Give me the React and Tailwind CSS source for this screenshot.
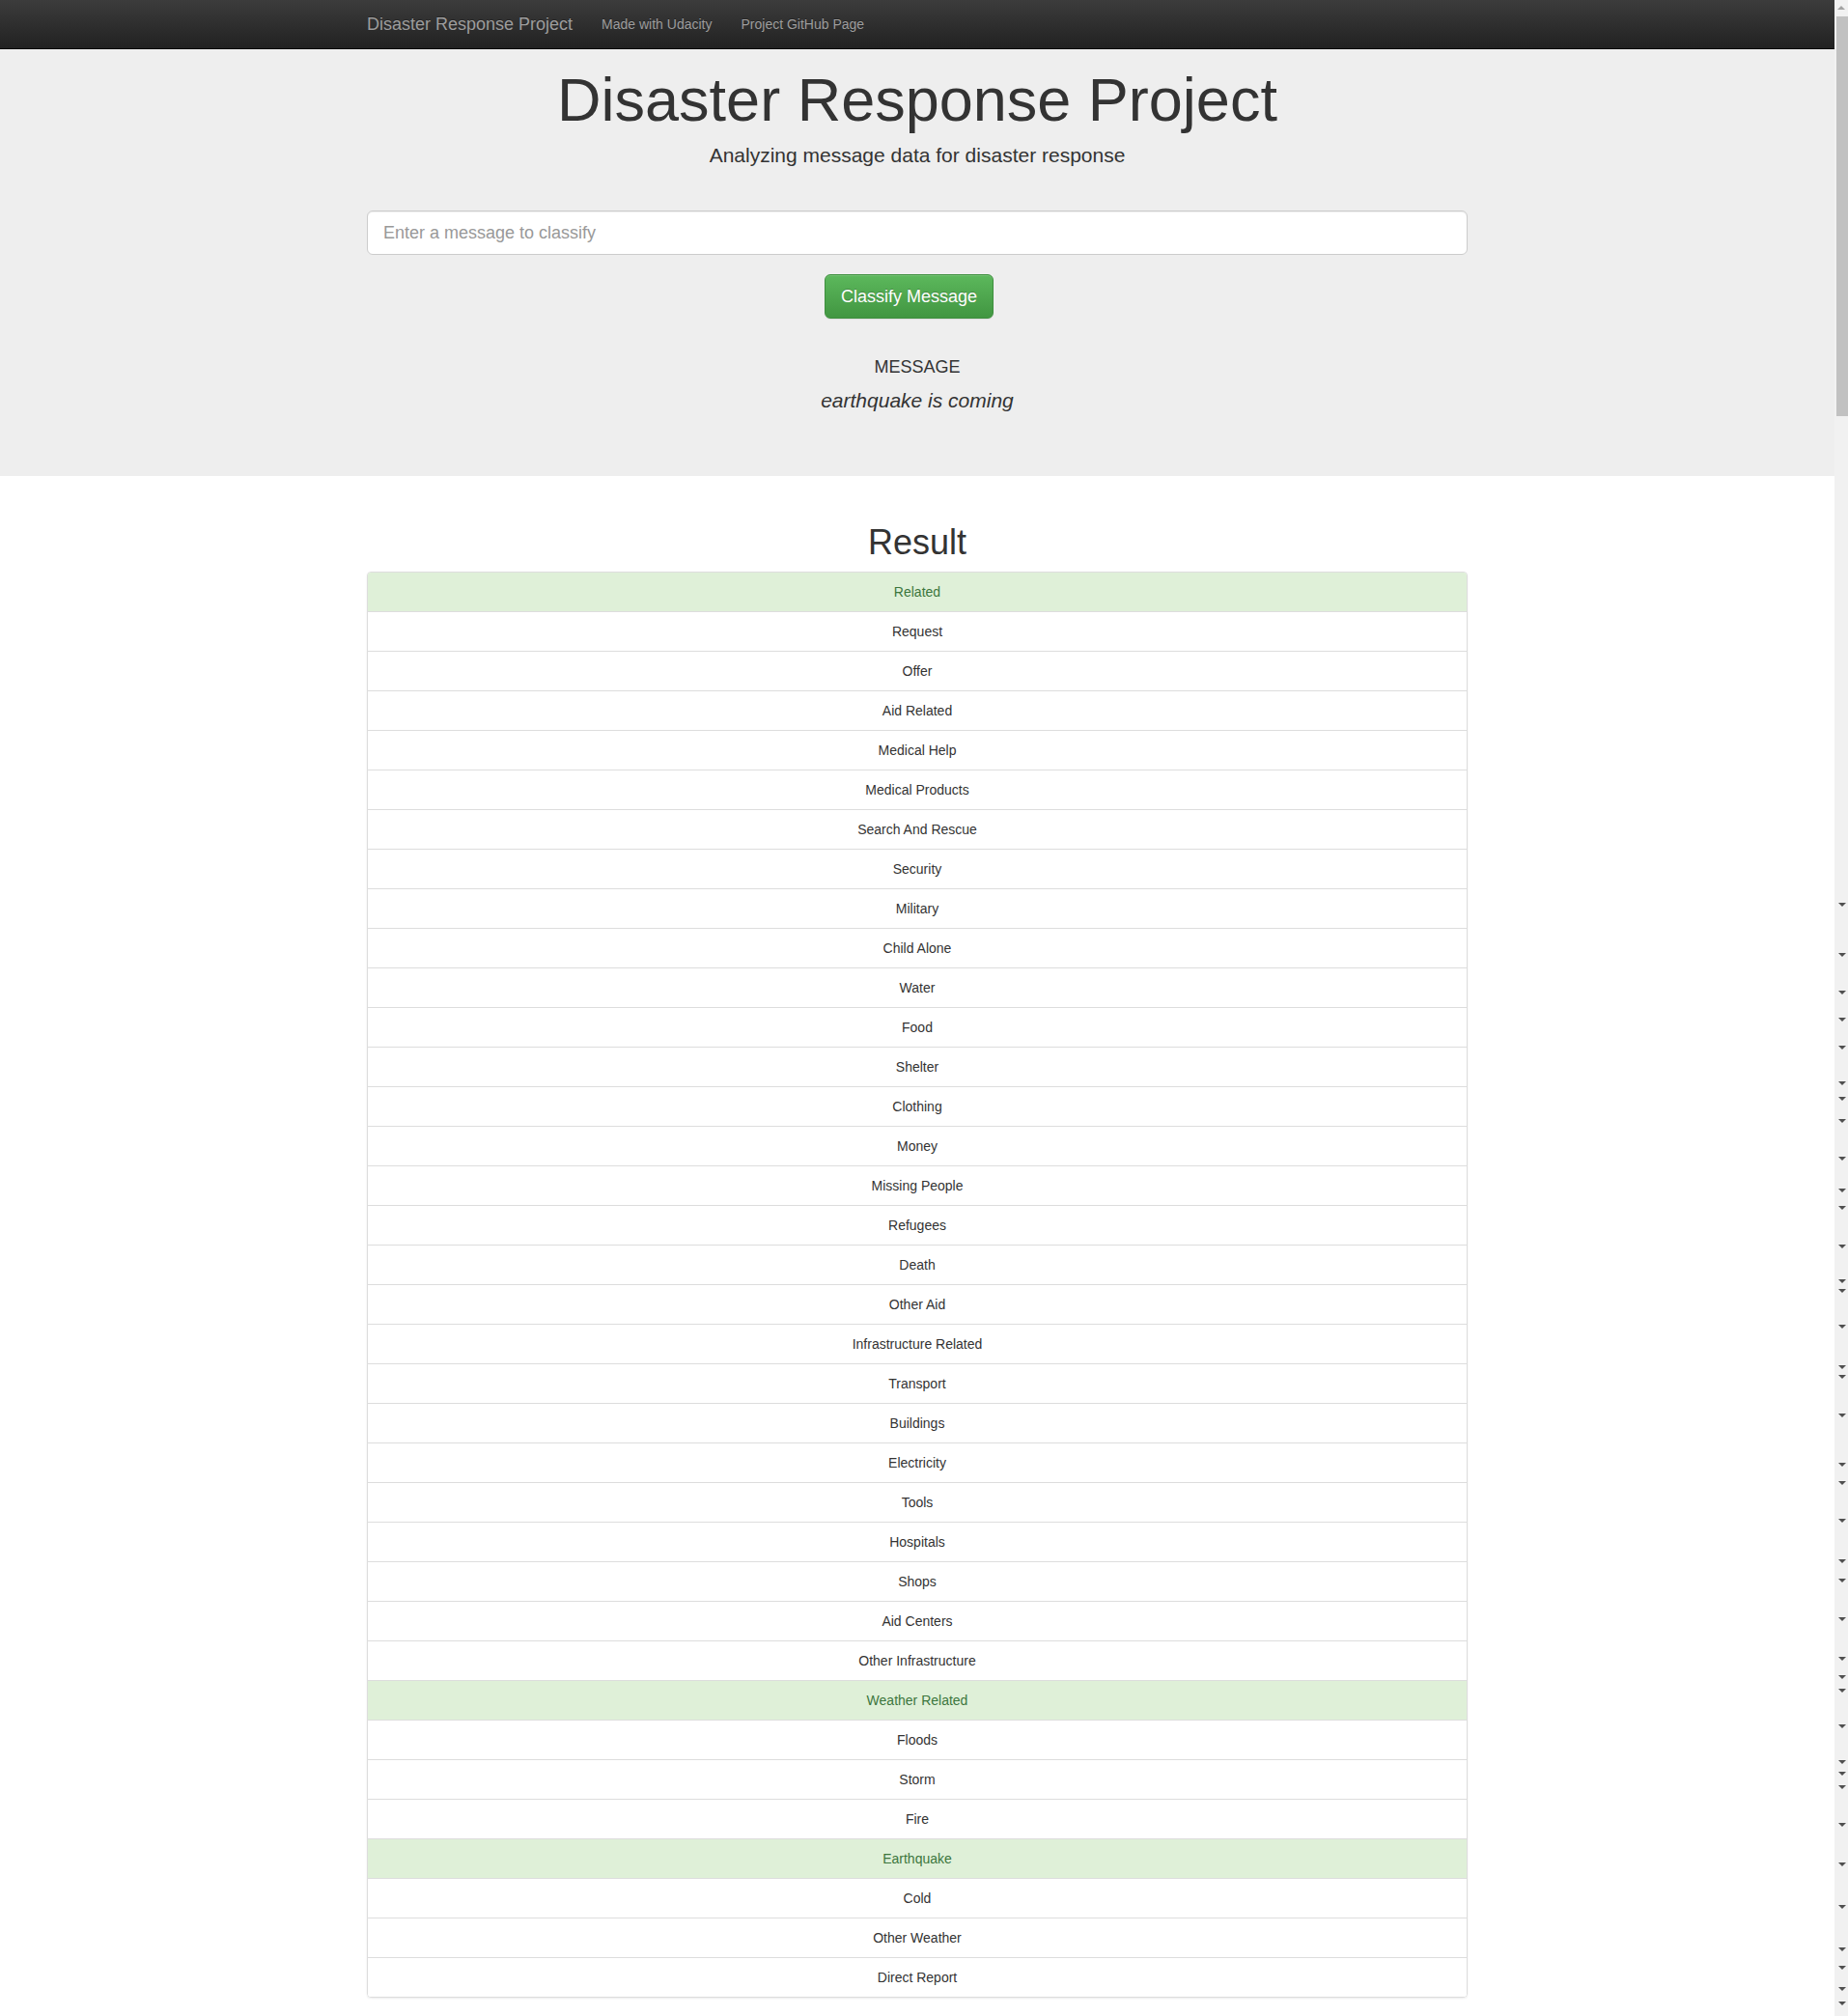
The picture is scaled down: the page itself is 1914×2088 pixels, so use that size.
const items = [
  'Related', 'Request', 'Offer', 'Aid Related', 'Medical Help', 'Medical Products',
  'Search And Rescue', 'Security', 'Military', 'Child Alone', 'Water', 'Food',
  'Shelter', 'Clothing', 'Money', 'Missing People', 'Refugees', 'Death', 'Other Aid',
  'Infrastructure Related', 'Transport', 'Buildings', 'Electricity', 'Tools',
  'Hospitals', 'Shops', 'Aid Centers', 'Other Infrastructure', 'Weather Related',
  'Floods', 'Storm', 'Fire', 'Earthquake', 'Cold', 'Other Weather', 'Direct Report',
];

const success = new Set(['Related', 'Weather Related', 'Earthquake']);

const arrows = [
  937, 989, 1028, 1056, 1085, 1122, 1138, 1161, 1200, 1233, 1251, 1291, 1327, 1337,
  1374, 1416, 1426, 1466, 1517, 1536, 1575, 1617, 1637, 1677, 1718, 1737, 1751, 1788,
  1825, 1837, 1851, 1890, 1931, 1975, 2019, 2038, 2060, 2075,
];

export default function App() {
  return (
    <div className="flex min-h-[2088px] bg-white font-['Liberation_Sans',Arial,sans-serif] text-[14px] leading-[20px] text-[#333]">
      <div className="w-[1900px] shrink-0">
        <nav className="h-[51px] border-b border-[#080808] bg-linear-to-b from-[#3c3c3c] to-[#222]">
          <div className="mx-auto flex h-[50px] w-[1140px] items-center">
            <span className="pr-[15px] text-[18px] leading-[20px] text-[#9d9d9d] [text-shadow:0_-1px_0_rgba(0,0,0,0.25)]">
              Disaster Response Project
            </span>
            <span className="px-[15px] text-[14px] leading-[20px] text-[#9d9d9d] [text-shadow:0_-1px_0_rgba(0,0,0,0.25)]">
              Made with Udacity
            </span>
            <span className="px-[15px] text-[14px] leading-[20px] text-[#9d9d9d] [text-shadow:0_-1px_0_rgba(0,0,0,0.25)]">
              Project GitHub Page
            </span>
          </div>
        </nav>

        <div className="bg-[#eee] pt-[18px] pb-[63px]">
          <div className="mx-auto w-[1140px] text-center">
            <h1 className="text-[63px] leading-[69px] font-normal text-[#333]">Disaster Response Project</h1>
            <p className="mt-[8px] text-[21px] leading-[30px] text-[#333]">
              Analyzing message data for disaster response
            </p>
            <input
              type="text"
              placeholder="Enter a message to classify"
              className="mt-[42px] block h-[46px] w-full rounded-[6px] border border-[#ccc] bg-white px-[16px] text-[18px] text-[#555] shadow-[inset_0_1px_1px_rgba(0,0,0,0.075)] outline-none placeholder:text-[#999]"
            />
            <div className="mt-[20px] flex pl-[474px]">
              <button className="h-[46px] rounded-[6px] border border-[#3e8f3e] bg-linear-to-b from-[#5cb85c] to-[#419641] px-[16px] text-[18px] leading-[24px] text-white shadow-[inset_0_1px_0_rgba(255,255,255,0.15),0_1px_1px_rgba(0,0,0,0.075)] [text-shadow:0_-1px_0_rgba(0,0,0,0.2)]">
                Classify Message
              </button>
            </div>
            <h4 className="mt-[40px] text-[18px] leading-[20px] font-normal text-[#333]">MESSAGE</h4>
            <p className="mt-[10px] text-[21px] leading-[30px] italic text-[#333]">earthquake is coming</p>
          </div>
        </div>

        <div className="mx-auto w-[1140px] pt-[49px] pb-[19px]">
          <h1 className="text-center text-[36px] leading-[40px] font-normal text-[#333]">Result</h1>
          <ul className="mt-[10px] divide-y divide-[#ddd] overflow-hidden rounded-[4px] border border-[#ddd] shadow-[0_1px_2px_rgba(0,0,0,0.075)]">
            {items.map((it) => (
              <li
                key={it}
                className={
                  success.has(it)
                    ? 'bg-[#dff0d8] px-[15px] py-[10px] text-center text-[#3c763d]'
                    : 'bg-white px-[15px] py-[10px] text-center text-[#333]'
                }
              >
                {it}
              </li>
            ))}
          </ul>
        </div>
      </div>

      <div className="relative w-[14px] shrink-0 bg-[#f1f1f1]">
        <div className="absolute left-[3px] top-[6px] h-0 w-0 border-x-4 border-b-4 border-x-transparent border-b-[#a3a3a3]" />
        <div className="absolute left-[2px] right-0 top-[17px] h-[414px] bg-[#c1c1c1]" />
        {arrows.map((y, i) => (
          <div
            key={i}
            className="absolute left-[4px] h-0 w-0 border-x-4 border-t-4 border-x-transparent border-t-[#505050]"
            style={{ top: y - 2 }}
          />
        ))}
      </div>
    </div>
  );
}
